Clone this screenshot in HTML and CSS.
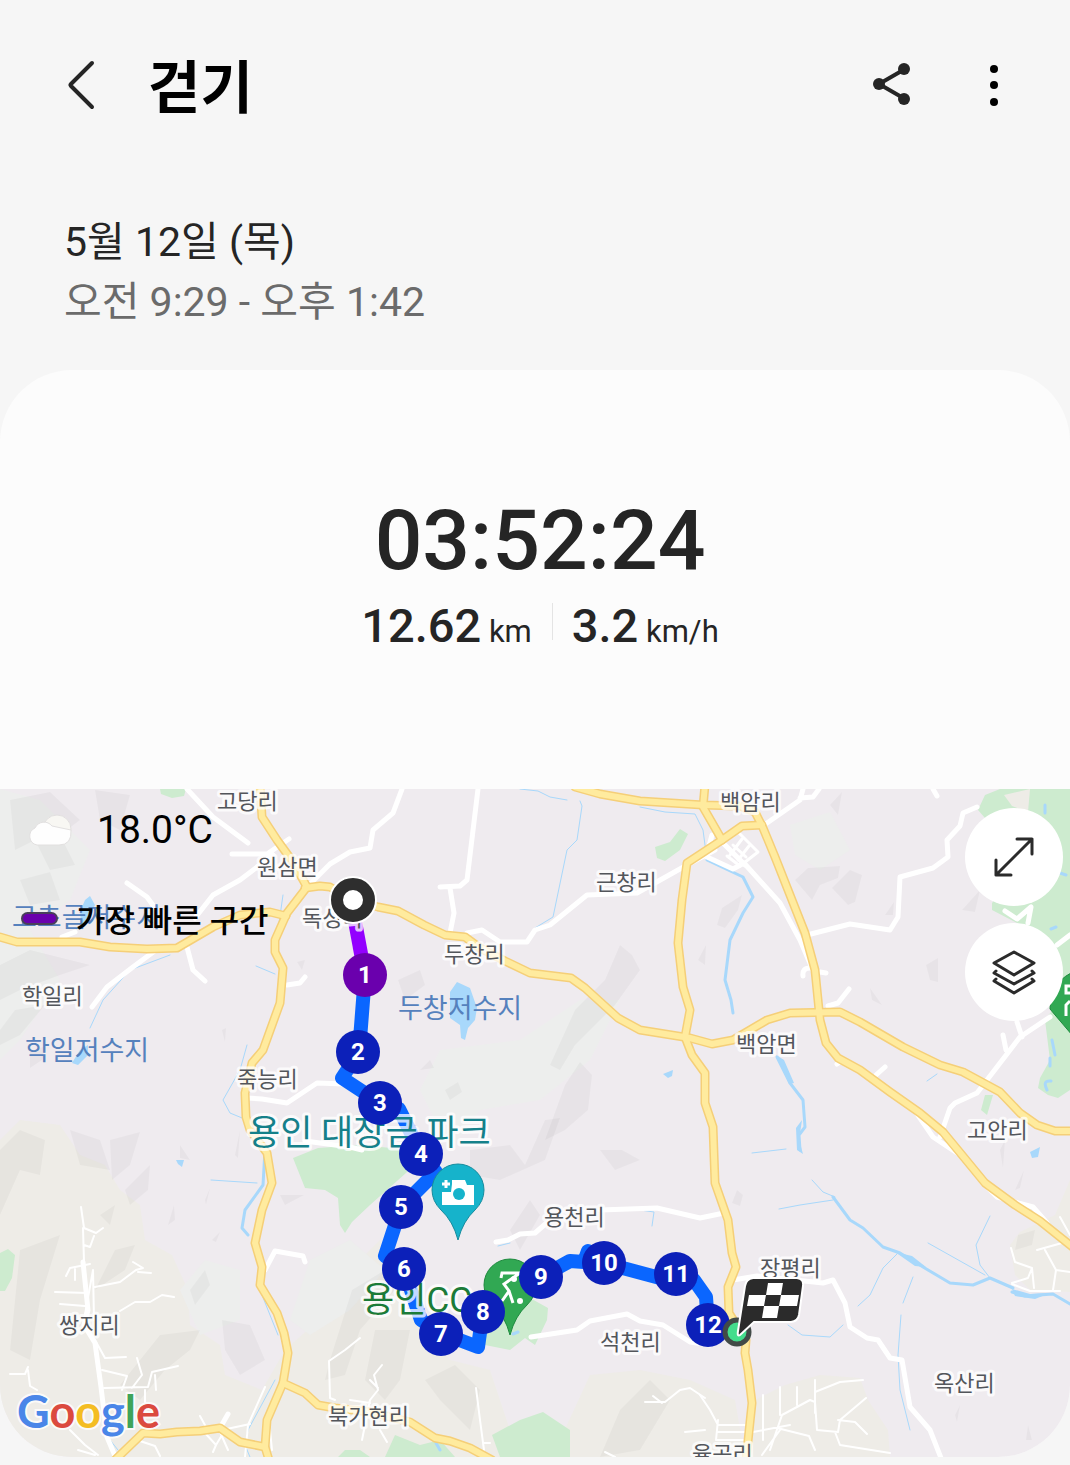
FILE: index.html
```html
<!DOCTYPE html>
<html lang="ko">
<head>
    <meta charset="UTF-8">
    <meta name="viewport" content="width=device-width, initial-scale=1.0">
    <title>걷기</title>
    <link rel="stylesheet" href="styles.css">
</head>
<body>
    <header class="app-bar">
        <button class="icon-button back" type="button" aria-label="뒤로">
            <svg width="36" height="60" viewBox="0 0 36 60"><path d="M28 7 L7 28 Q6 29 7 30 L28 51"/></svg>
        </button>
        <h1>걷기</h1>
        <button class="icon-button share" type="button" aria-label="공유">
            <svg width="60" height="60" viewBox="0 0 60 60">
                <path d="M47 13 L21 28 L47 43"/>
                <circle cx="21" cy="28" r="6"/><circle cx="46" cy="13" r="6"/><circle cx="46" cy="43" r="6"/>
            </svg>
        </button>
        <button class="icon-button more" type="button" aria-label="더보기">
            <svg width="24" height="60" viewBox="0 0 24 60">
                <circle cx="12" cy="13" r="4"/><circle cx="12" cy="29" r="4"/><circle cx="12" cy="46" r="4"/>
            </svg>
        </button>
    </header>

    <section class="period">
        <p class="date">5월 12일 (목)</p>
        <p class="hours">오전 9:29 - 오후 1:42</p>
    </section>

    <main class="card">
        <section class="summary">
            <p class="duration">03:52:24</p>
            <div class="stats">
                <p class="stat">12.62 <span>km</span></p>
                <p class="stat">3.2 <span>km/h</span></p>
            </div>
        </section>

        <section class="map">
            <svg class="map-canvas" viewBox="0 789 1070 668">
                <rect class="land" x="0" y="789" width="1070" height="668"/>

                <!-- hills -->
                <g class="sand">
                    <path d="M0 1140 L20 1120 L60 1125 L80 1155 L105 1165 L120 1190 L140 1205 L145 1240 L172 1255 L188 1290 L190 1325 L220 1345 L225 1375 L262 1390 L285 1350 L330 1310 L350 1270 L380 1240 L400 1300 L450 1360 L490 1370 L510 1430 L560 1440 L590 1375 L640 1370 L690 1380 L735 1400 L745 1457 L0 1457 Z"/>
                    <path d="M755 1400 L785 1385 L820 1375 L860 1378 L868 1400 L888 1430 L890 1457 L750 1457 Z"/>
                    <path d="M1070 1180 L1055 1215 L1020 1232 L1010 1245 L1015 1275 L1030 1290 L1070 1292 Z"/>
                </g>
                <g class="pale">
                    <path d="M0 789 L40 800 L90 850 L70 900 L30 930 L60 980 L20 1040 L0 1060 Z"/>
                    <path d="M420 1090 L440 1050 L520 1040 L580 1000 L620 1000 L590 1060 L540 1100 L480 1110 L450 1150 Z"/>
                    <path d="M310 1260 L350 1240 L385 1270 L350 1310 L310 1335 L290 1320 Z"/>
                    <path d="M790 825 L830 812 L850 850 L820 870 L795 855 Z"/>
                    <path d="M180 1290 L205 1260 L240 1270 L240 1320 L200 1335 Z"/>
                </g>
                <g class="shade">
                    <path d="M10 800 L50 792 L80 820 L60 835 L75 865 L50 870 L35 840 L15 850 Z"/>
                    <path d="M95 790 L130 795 L120 830 L100 820 Z"/>
                    <path d="M20 880 L50 872 L60 900 L30 905 Z"/>
                    <path d="M0 965 L30 950 L90 965 L60 975 L20 990 L0 1000 Z"/>
                    <path d="M15 1010 L45 1005 L20 1035 L0 1045 L0 1030 Z"/>
                    <path d="M30 1052 L45 1046 L42 1060 L30 1068 Z"/>
                    <path d="M0 1150 L20 1130 L45 1140 L40 1175 L20 1170 L0 1215 Z"/>
                    <path d="M70 1130 L100 1140 L110 1170 L80 1165 Z"/>
                    <path d="M110 1140 L140 1132 L130 1165 L112 1180 Z"/>
                    <path d="M125 1190 L150 1165 L148 1190 L130 1205 Z"/>
                    <path d="M20 1250 L60 1235 L40 1300 L30 1360 L10 1350 Z"/>
                    <path d="M95 1290 L115 1250 L135 1245 L125 1270 Z"/>
                    <path d="M100 1215 L115 1205 L110 1225 Z"/>
                    <path d="M190 1290 L205 1270 L210 1285 L195 1305 Z"/>
                    <path d="M160 1335 L200 1330 L190 1350 L165 1370 L140 1400 L120 1385 Z"/>
                    <path d="M222 1320 L250 1325 L265 1360 L240 1375 L225 1350 Z"/>
                    <path d="M180 1145 L190 1160 L180 1158 Z M205 1200 L210 1188 L206 1205 Z M235 1155 L240 1130 L238 1158 Z"/>
                    <path d="M280 1195 L304 1195 L285 1205 Z M212 1240 L220 1232 L216 1242 Z M174 1205 L175 1220 L168 1225 Z"/>
                    <path d="M330 1360 L352 1290 L385 1270 L395 1290 L360 1330 L345 1375 L325 1380 Z"/>
                    <path d="M375 1330 L410 1330 L400 1380 L385 1400 L365 1380 Z"/>
                    <path d="M425 1380 L455 1365 L480 1390 L470 1430 L440 1400 Z"/>
                    <path d="M470 1150 L510 1145 L525 1165 L545 1120 L560 1118 L545 1160 L500 1180 L470 1175 Z"/>
                    <path d="M550 1065 L575 1010 L605 980 L620 945 L632 955 L640 970 L615 1005 L600 1020 L575 1045 L560 1070 Z"/>
                    <path d="M565 1085 L580 1062 L592 1075 L588 1110 L565 1130 L545 1140 Z"/>
                    <path d="M398 980 L420 970 L425 985 L405 1000 Z M445 1090 L458 1082 L462 1092 L450 1100 Z M420 1070 L430 1060 L434 1068 Z"/>
                    <path d="M510 1230 L530 1200 L540 1215 L520 1250 Z M600 1150 L622 1150 L640 1160 L615 1170 Z"/>
                    <path d="M795 880 L808 868 L840 866 L838 878 L820 885 L812 900 Z"/>
                    <path d="M832 888 L850 870 L862 875 L855 902 L848 905 Z"/>
                    <path d="M830 805 L842 792 L838 815 Z M885 915 L894 902 L893 915 Z M962 910 L980 890 L975 912 Z"/>
                    <path d="M717 925 L722 908 L742 895 L738 910 L725 928 Z M926 965 L938 958 L938 982 L930 980 Z"/>
                    <path d="M870 988 L882 1005 L872 1000 Z M698 960 L706 945 L705 965 Z M732 1203 L737 1190 L743 1195 L740 1206 Z"/>
                    <path d="M620 1410 L650 1380 L670 1400 L640 1450 L600 1457 Z"/>
                    <path d="M1000 1150 L1005 1140 L1003 1168 Z M1015 1190 L1024 1170 L1020 1188 Z M955 1415 L960 1405 L957 1422 Z M1026 1440 L1028 1425 L1032 1440 Z"/>
                    <path d="M1018 1235 L1035 1230 L1032 1245 L1015 1250 Z M222 1030 L226 1028 L225 1042 Z M297 962 L305 960 L302 970 Z"/>
                </g>
                <g class="forest">
                    <path d="M160 789 L186 789 L184 796 L172 798 L161 794 Z"/>
                    <path d="M655 847 L670 842 L680 829 L688 834 L680 850 L665 861 L657 858 Z"/>
                    <path d="M293 1158 L318 1148 L360 1145 L412 1150 L415 1165 L370 1205 L352 1222 L345 1233 L340 1225 L338 1198 L325 1190 L305 1188 Z"/>
                    <path d="M0 1253 L8 1249 L15 1255 L12 1278 L5 1291 L0 1291 Z"/>
                    <path d="M480 1340 L500 1312 L530 1298 L548 1308 L547 1320 L535 1345 L525 1338 L510 1350 L485 1345 Z"/>
                    <path d="M492 1435 L520 1420 L543 1412 L570 1430 L570 1457 L500 1457 Z"/>
                    <path d="M395 1435 L420 1445 L440 1440 L455 1457 L385 1457 Z M338 1457 L345 1450 L360 1450 L370 1457 Z"/>
                    <path d="M978 810 L985 795 L1000 789 L1070 789 L1070 1090 L1058 1098 L1048 1095 L1038 1088 L1040 1078 L1050 1060 L1045 1020 L1060 1000 L1060 970 L1040 935 L992 910 L992 903 L1010 880 L1000 830 L985 818 Z"/>
                    <path d="M985 1095 L993 1095 L987 1115 L981 1110 Z"/>
                </g>
                <path class="sand" d="M1004 795 L1030 789 L1028 812 L1012 806 Z"/>

                <!-- water -->
                <g class="stream">
                    <path d="M520 789 L538 791 L550 797 L567 800 M580 801 L582 806 L577 840 L567 850 L553 917 L535 928"/>
                    <path d="M640 807 L665 812 L695 814 L703 830 L707 860"/>
                    <path class="wide" d="M707 860 L743 877 L753 897 L743 913 L730 940 L725 980 L731 1000 L733 1013"/>
                    <path class="wide" d="M777 1057 L790 1083 L803 1100 L805 1127 L799 1135 L800 1150"/>
                    <path class="wide" d="M833 1197 L850 1220 L863 1228 L883 1247 L900 1253 L923 1267 L950 1283 L973 1285 L990 1278 L1013 1288 M1012 1292 L1025 1296 L1053 1294 L1070 1304"/>
                    <path d="M812 1180 L823 1192 L835 1197 M779 1209 L800 1205 L833 1200 M897 1254 L883 1268 L870 1295 L858 1306 M990 1216 L976 1245 L980 1265 L990 1278 M928 1243 L985 1275 M913 1277 L903 1303"/>
                    <path d="M901 1315 L898 1355 L900 1390 L910 1430 M788 1325 L802 1335 L830 1337 L843 1325 M752 1153 L786 1149"/>
                    <path d="M170 955 L130 970 L103 1000 L90 1028 M256 966 L275 974 M283 895 L278 930"/>
                    <path d="M247 1045 L240 1070 L223 1100 L230 1113 L247 1120"/>
                    <path class="wide" d="M265 1150 L263 1185 L245 1210 L242 1228 L248 1235"/>
                    <path d="M211 1180 L257 1183 M260 1290 L278 1335 M275 1380 L248 1430 L245 1445 L250 1457 M110 1440 L118 1450 M498 1246 L510 1243 M640 1210 L654 1212 L652 1226 M927 1081 L937 1074"/>
                </g>
                <g class="lake">
                    <path d="M450 992 L457 982 L470 988 L477 1008 L475 1020 L468 1028 L465 1040 L461 1038 L460 1025 L450 1018 Z"/>
                    <path d="M80 912 L85 900 L90 896 L95 905 L90 915 L82 930 Z M72 1063 L80 1050 L88 1045 L88 1055 L78 1065 Z"/>
                    <path d="M176 1160 L184 1160 L182 1167 L178 1164 Z M663 1074 L673 1070 L672 1076 L668 1078 Z M1030 1152 L1040 1147 L1038 1157 L1032 1158 Z"/>
                    <path d="M776 1055 L784 1060 L794 1083 L789 1084 L783 1070 Z M895 1252 L912 1256 L926 1267 L915 1266 Z M796 1128 L802 1120 L799 1140 L803 1154 L797 1150 Z"/>
                    <path d="M1012 1289 L1030 1294 L1050 1293 L1035 1299 L1015 1296 Z"/>
                </g>
                <path class="stream wide" d="M1045 805 V813 M1060 873 L1066 875 M1051 929 L1056 927 M1052 1040 L1055 1055 M1050 1058 V1066 M1047 1090 Q1042 1080 1051 1081 M436 1443 L440 1450 M513 1334 L518 1332"/>

                <!-- minor roads -->
                <g class="lane">
                    <path d="M81 1207 L84 1228 L96 1233 L103 1228 M83 1228 L84 1262 M84 1245 L90 1247 L94 1236 M66 1276 L70 1268 L90 1264 M75 1269 V1280 M95 1287 L120 1282 L136 1270 L143 1268 L133 1262 M138 1272 L151 1273 M55 1292 L88 1293 M60 1304 L85 1306 M120 1311 L135 1302 L150 1302 L162 1295 L174 1297 M84 1320 L93 1270 L94 1320"/>
                    <path d="M10 1374 L25 1374 L28 1367 M28 1370 L30 1386 L37 1390 M95 1340 L105 1358 L126 1357 M102 1370 L127 1376 L122 1390 M104 1388 L148 1387 L152 1372 L178 1366 M137 1358 L142 1375 L132 1388 M155 1375 L156 1390 M145 1390 V1402 M70 1430 L85 1445 L98 1455 M78 1450 L95 1455 M137 1440 L155 1446 L160 1456"/>
                    <path d="M200 1416 L206 1427 L222 1430 L250 1424 M205 1433 L216 1445 L225 1430 M216 1445 L213 1452 M220 1432 L228 1450 M360 1338 L345 1350 L329 1361 L330 1398 L335 1400 M265 1387 L248 1425 L245 1457 M270 1430 L272 1450"/>
                    <path d="M382 1365 L374 1375 L378 1390 L370 1400 L362 1440 M370 1380 L378 1388 M380 1430 L387 1442 M350 1400 L370 1403 M476 1388 L480 1420 L484 1450 M484 1443 L490 1443 M645 1402 L665 1402 L680 1390 L690 1388 L705 1398 M653 1396 L662 1403 M605 1452 L615 1457 M685 1432 L705 1430"/>
                    <path d="M700 1395 L710 1410 L718 1425 L750 1425 M718 1432 L748 1432 M718 1420 L716 1440 L748 1440 M763 1395 V1440 M780 1387 V1415 M797 1387 V1405 M815 1380 V1413 M815 1392 L840 1382 L863 1380 M770 1450 L782 1415 L810 1400 L815 1402 L817 1430 L838 1432 L840 1420 L866 1398 M838 1420 L855 1422 L867 1434 M777 1428 L809 1436 L815 1450 M835 1432 L840 1445 L890 1453 M753 1432 L790 1425 M762 1455 L780 1430"/>
                    <path d="M1011 1248 L1015 1262 L1032 1268 L1028 1278 L1012 1283 M1032 1268 L1034 1288 M1045 1250 L1056 1270 L1070 1272 M1037 1250 L1062 1243 M1056 1270 L1053 1290 M1060 1217 L1070 1235 M1012 1284 L1030 1291 L1060 1291"/>
                </g>
                <path class="block" d="M727 840 L738 832 L758 852 L740 866 L727 856 M733 845 L746 857 M742 839 L730 855 M749 846 L738 860"/>
                <g class="street">
                    <path d="M402 789 L393 813 L373 830 L370 848 L350 852 L330 864 L310 884"/>
                    <path d="M478 789 L467 880 L460 886 L440 887 M450 888 L454 913 L450 933"/>
                    <path d="M467 933 L482 930 L500 942 L527 942 L535 930 L550 925 L587 895 L637 893 L687 865 L715 850"/>
                    <path d="M187 789 L213 817 L248 843 M232 854 L267 854 L289 839 M127 883 L147 897 L155 908 M195 918 L213 895 L240 880 L273 855"/>
                    <path d="M92 1007 L107 987 L133 967 L160 947 M187 947 L193 970 L205 981 M287 985 L300 983 L305 977 M247 1098 L262 1099 L287 1103 L317 1083 L345 1084 M62 937 L75 932"/>
                    <path d="M767 823 L800 800 L803 789 M800 798 L813 797 L819 789 M807 935 L850 924 L890 930 L898 917 L900 877 L933 868 L948 857 L947 840 L960 826 L963 813 L977 807 M933 789 L937 796"/>
                    <path d="M707 857 L733 869 L744 863 L780 903 L800 940 L815 975 M720 840 L745 865 M708 850 L712 835 M1005 911 L1017 919 L1031 907 L1028 923 M1057 945 L1070 935"/>
                    <path d="M820 972 L826 973 M803 976 Q802 968 810 968 M828 1006 L838 1003 L849 989 M837 1064 L843 1060 M876 1075 L885 1067 M1003 1035 L1006 1050 M1017 1022 L1022 1037"/>
                    <path d="M940 1137 L950 1108 L955 1103 L977 1093 L1020 1037 L1050 1017 M913 1108 L933 1137 L957 1153 M983 1183 L997 1197 L1033 1207 L1047 1223"/>
                    <path d="M733 1280 L757 1276 L823 1283 L833 1280 L845 1303 L850 1327 L867 1338 L878 1340 L890 1358 L902 1360 L910 1407 L930 1430 L941 1458"/>
                    <path d="M496 1242 L508 1240 L520 1234 L535 1233 L550 1220 M600 1210 L657 1208 L700 1218 L724 1213 M531 1337 L577 1330 L590 1321 L627 1314 L640 1321 L663 1325 L690 1342 L710 1345"/>
                    <path d="M265 1270 L275 1251 L303 1256 L305 1262 M83 1262 L88 1310 L84 1325 L95 1343 L101 1387 L107 1437 L115 1456 M220 1428 L228 1414"/>
                    <path d="M305 1141 L350 1147 L362 1150"/>
                </g>

                <!-- main roads, drawn twice for the casing -->
                <defs>
                    <g id="highways">
                        <path d="M0 937 L17 942 L80 942 L110 947 L147 949 L177 948 L213 927 L240 915 L270 912 L286 916"/>
                        <path d="M260 785 L262 817 L277 840 L293 862 L307 887 L287 913 L275 940 L275 952 L283 968 L280 1003 L263 1050 L252 1063 L245 1093 L246 1117 L250 1130 L267 1153 L272 1183 L262 1210 L255 1243 L262 1267 L260 1285 L277 1313 L284 1333 L288 1353 L283 1383 L267 1420 L265 1447 L269 1460"/>
                        <path d="M305 888 L320 886 L330 887 L352 900 L378 907 L398 911 L424 925 L445 935 L465 937 L480 948 L505 961 L530 973 L571 978 L585 988 L618 1018 L640 1030 L690 1038 L712 1044 L733 1040 L767 1020 L790 1013 L840 1012 L860 1022 L903 1047 L940 1065 L963 1072 L1000 1092 L1020 1113 L1037 1125 L1055 1131 L1075 1131"/>
                        <path d="M762 825 L742 826 L722 840 L687 863 L682 900 L678 943 L683 987 L690 1010 L685 1037 L692 1055 L705 1073 L705 1103 L713 1127 L715 1183 L728 1220 L732 1253 L736 1267 L728 1287 L729 1313 L746 1340 L745 1353 L748 1370 L752 1403 L746 1460"/>
                        <path d="M575 787 L600 794 L640 801 L703 805 L740 806 L755 812 L763 828 L775 857 L805 933 L815 970 L820 1020 L826 1043 L838 1058 L860 1070 L890 1092 L920 1113 L943 1132 L962 1155 L985 1183 L1015 1205 L1040 1221 L1075 1249"/>
                        <path d="M705 785 L703 807 L722 840"/>
                        <path d="M115 1460 L143 1433 L160 1434 L177 1432 L200 1431 L220 1428 L240 1442 L265 1447 M283 1383 L305 1393 L318 1405 L335 1408 L370 1412 L410 1422 L435 1438 L450 1441 L470 1448 L492 1460"/>
                    </g>
                </defs>
                <use class="road-edge" href="#highways"/>
                <use class="road" href="#highways"/>

                <!-- walked route -->
                <path class="route" d="M365 975 L359 1052 L342 1078 L380 1103 L399 1109 L421 1153 L436 1172 L401 1207 L385 1256 L404 1269 L421 1320 L441 1333 L478 1347 L483 1311 L541 1277 L570 1261 L584 1262 L588 1251 L604 1263 L660 1278 L676 1274 L694 1280 L706 1297 L708 1325"/>
                <path class="route fastest" d="M351 900 L365 975"/>

                <!-- place names -->
                <g class="place">
                    <text x="217" y="809">고당리</text>
                    <text x="257" y="875">원삼면</text>
                    <text x="302" y="926">독성리</text>
                    <text x="22" y="1004">학일리</text>
                    <text x="237" y="1087">죽능리</text>
                    <text x="596" y="890">근창리</text>
                    <text x="444" y="962">두창리</text>
                    <text x="720" y="810">백암리</text>
                    <text x="736" y="1052">백암면</text>
                    <text x="967" y="1138">고안리</text>
                    <text x="544" y="1225">용천리</text>
                    <text x="760" y="1276">장평리</text>
                    <text x="600" y="1350">석천리</text>
                    <text x="934" y="1391">옥산리</text>
                    <text x="59" y="1333">쌍지리</text>
                    <text x="328" y="1424">북가현리</text>
                    <text x="692" y="1462">율곡리</text>
                </g>
                <g class="place water">
                    <text x="12" y="927">고초골저수지</text>
                    <text x="398" y="1018">두창저수지</text>
                    <text x="25" y="1060">학일저수지</text>
                </g>
                <text class="place sight" x="248" y="1145">용인 대장금 파크</text>
                <text class="place golf" x="362" y="1312">용인CC</text>

                <!-- sight pins -->
                <path class="pin" d="M458 1240 Q453 1221 441 1210 Q432 1201 432 1190 A26 26 0 0 1 484 1190 Q484 1201 475 1210 Q463 1221 458 1240 Z"/>
                <path class="glyph" d="M452 1184 V1180 H465 L467 1185 H474 V1205 H442 V1192 H451 Z"/>
                <path class="glyph-line" d="M446 1180 V1188 M442 1184 H450"/>
                <circle class="pin-eye" cx="459" cy="1194" r="6"/>
                <path class="pin golf-pin" d="M510 1335 Q505 1316 493 1305 Q484 1296 484 1285 A26 26 0 0 1 536 1285 Q536 1296 527 1305 Q515 1316 510 1335 Z"/>
                <path class="glyph-line" d="M520 1273 H502 L501 1278 M520 1273 L504 1284 L509 1291 L502 1301 M509 1291 L513 1303"/>
                <circle class="glyph" cx="514" cy="1279" r="3"/><circle class="glyph" cx="520" cy="1301" r="3"/>
                <path class="pin golf-pin" d="M1050 1009 Q1050 980 1078 970 V1042 Z"/>
                <path class="glyph-line" d="M1070 986 H1066 V993 H1070 M1070 1001 L1066 1005 V1016"/>

                <!-- kilometre markers -->
                <g class="marker">
                    <circle class="fastest" cx="365" cy="975" r="22"/><text x="365" y="983">1</text>
                    <circle cx="358" cy="1052" r="22"/><text x="358" y="1060">2</text>
                    <circle cx="380" cy="1103" r="22"/><text x="380" y="1111">3</text>
                    <circle cx="421" cy="1154" r="22"/><text x="421" y="1162">4</text>
                    <circle cx="401" cy="1207" r="22"/><text x="401" y="1215">5</text>
                    <circle cx="404" cy="1269" r="22"/><text x="404" y="1277">6</text>
                    <circle cx="441" cy="1334" r="22"/><text x="441" y="1342">7</text>
                    <circle cx="483" cy="1312" r="22"/><text x="483" y="1320">8</text>
                    <circle cx="541" cy="1277" r="22"/><text x="541" y="1285">9</text>
                    <circle cx="604" cy="1263" r="22"/><text x="604" y="1271">10</text>
                    <circle cx="676" cy="1274" r="22"/><text x="676" y="1282">11</text>
                    <circle cx="708" cy="1325" r="22"/><text x="708" y="1333">12</text>
                </g>

                <circle class="start-halo" cx="353" cy="900" r="23"/>
                <circle class="start" cx="353" cy="900" r="16"/>
                <circle class="finish-dot" cx="737" cy="1332" r="12"/>
                <path class="flag" d="M753 1278 H797 Q804 1279 803 1286 L799 1315 Q798 1321 791 1322 H754 L740 1335 Q737 1337 738 1331 L745 1286 Q746 1279 753 1278 Z"/>
                <path class="checks" d="M768 1283 H783 L781 1295 H766 Z M749 1295 H766 L764 1306 H747 Z M781 1295 H799 L797 1306 H779 Z M764 1306 H779 L777 1318 H762 Z"/>

                <text class="google" x="17" y="1428"><tspan class="b">G</tspan><tspan class="r">o</tspan><tspan class="y">o</tspan><tspan class="b">g</tspan><tspan class="g">l</tspan><tspan class="r">e</tspan></text>
            </svg>

            <div class="map-info">
                <p class="weather">
                    <svg width="46" height="32" viewBox="0 0 46 32">
                        <circle cx="30" cy="15" r="14"/>
                        <path d="M10 31 A9 9 0 0 1 8 14 A10 10 0 0 1 25 12 L44 16 Q45 31 32 31 Z"/>
                    </svg>
                    18.0°C
                </p>
                <p class="legend"><span class="swatch"></span>가장 빠른 구간</p>
            </div>

            <div class="map-controls">
                <button type="button" aria-label="지도 확대">
                    <svg width="48" height="48" viewBox="0 0 48 48"><path d="M6 42 L42 6 M27 6 H42 V21 M6 27 V42 H21"/></svg>
                </button>
                <button type="button" aria-label="지도 유형">
                    <svg width="48" height="48" viewBox="0 0 48 48"><path d="M24 4 L44 15 L24 27 L4 15 Z M6 23 L4 25 L24 36 L44 25 L42 23 M6 31 L4 33 L24 45 L44 33 L42 31"/></svg>
                </button>
            </div>
        </section>
    </main>
</body>
</html>
```
FILE: styles.css
```css
body {
    margin: 0;
    background-color: #f6f6f6;
    color: #252525;
    font-family: Roboto, "Noto Sans CJK KR", sans-serif;
}
h1, p {
    margin: 0;
}
button {
    padding: 0;
    border: none;
    cursor: pointer;
}

/* Top bar */
.app-bar {
    display: flex;
    align-items: flex-start;
    height: 60px;
    padding: 56px 64px 96px;
}
.app-bar h1 {
    flex: 1;
    margin-left: 48px;
    color: #000;
    font-size: 57px;
    font-weight: 700;
    line-height: 66px;
}
.icon-button {
    height: 60px;
    background: none;
}
.icon-button svg, .map-controls svg {
    display: block;
    margin: auto;
}
.icon-button path {
    fill: none;
    stroke: #252525;
    stroke-width: 4;
    stroke-linecap: round;
}
.share circle {
    fill: #252525;
}
.more {
    margin-left: 64px;
}

.period {
    padding: 0 64px 38px;
    font-size: 41px;
    line-height: 60px;
}
.hours {
    color: #6b6b6b;
}

/* Workout card */
.card {
    margin-bottom: 8px;
    overflow: hidden;
    border-radius: 72px;
    background-color: #fcfcfc;
}
.summary {
    padding: 123px 0 129px 10px;
    text-align: center;
}
.duration {
    font-size: 84px;
    font-weight: 500;
    line-height: 96px;
}
.stats {
    display: flex;
    justify-content: center;
    align-items: center;
    margin-top: 9px;
}
.stat {
    padding: 0 20px;
    font-size: 47px;
    font-weight: 500;
    line-height: 56px;
}
.stat span {
    margin-left: -4px;
    font-size: 31px;
    font-weight: 400;
}
.stat + .stat {
    background: linear-gradient(#e4e4e4, #e4e4e4) left 5px / 1px 37px no-repeat;
}

/* Map */
.map {
    position: relative;
}
.map-canvas {
    display: block;
    width: 100%;
    height: auto;
}
.land { fill: #efebef; }
.sand { fill: #eeece7; }
.pale { fill: #edeeed; }
.shade { fill: #000; fill-opacity: 0.03; }
.forest { fill: #cdebcf; }
.lake { fill: #a8d8fb; }
.stream, .lane, .block, .street, .road, .road-edge, .route {
    fill: none;
    stroke-linecap: round;
    stroke-linejoin: round;
}
.stream { stroke: #a8d8fb; stroke-width: 1; }
.wide { stroke-width: 3; }
.lane { stroke: #fff; stroke-width: 2; }
.block { stroke: #fff; stroke-width: 3; }
.street { stroke: #fff; stroke-width: 5; }
.road-edge { stroke: #f5cf78; stroke-width: 9; }
.road { stroke: #ffeb9e; stroke-width: 6; }
.route { stroke: #0a66ff; stroke-width: 14; }
.route.fastest { stroke: #9300ff; stroke-linecap: butt; }

.place {
    fill: #53565b;
    stroke: rgba(255, 255, 255, 0.75);
    stroke-width: 6;
    stroke-linejoin: round;
    paint-order: stroke;
    font-size: 22px;
}
.place.water {
    fill: #5581bd;
    stroke: none;
    font-size: 27px;
}
.place.sight {
    fill: #15808a;
    font-size: 35px;
}
.place.golf {
    fill: #1b7b38;
    font-size: 35px;
}
.pin { fill: #16b3cb; stroke: #168c9e; stroke-width: 1; }
.pin-eye { fill: #16b3cb; }
.pin.golf-pin { fill: #31a853; stroke: #1e8a3e; }
.glyph { fill: #fff; }
.glyph-line { fill: none; stroke: #fff; stroke-width: 3; }

.marker { fill: #0c20b9; }
.marker .fastest { fill: #6a00ad; }
.marker text {
    fill: #fff;
    font-size: 24px;
    font-weight: 700;
    text-anchor: middle;
}
.start-halo { fill: #fff; stroke: #fff; stroke-width: 2; }
.start { fill: #fff; stroke: #2e2e2e; stroke-width: 12; }
.finish-dot { fill: #43dd8c; stroke: #424a47; stroke-width: 5; }
.flag { fill: #2b2b2b; stroke: #fff; stroke-width: 2; }
.checks { fill: #fff; }

.google {
    stroke: rgba(255, 255, 255, 0.8);
    stroke-width: 4;
    paint-order: stroke;
    font-family: Lato, sans-serif;
    font-size: 45px;
    font-weight: 700;
}
.google .b { fill: #4a86e8; }
.google .r { fill: #db4a3f; }
.google .y { fill: #f4bd22; }
.google .g { fill: #3fa45a; }

.map-info {
    position: absolute;
    top: 17px;
    left: 21px;
    color: #000;
}
.weather, .legend {
    display: flex;
    align-items: center;
    height: 48px;
}
.weather {
    gap: 24px;
    padding-left: 6px;
    font-size: 39px;
}
.weather svg {
    fill: #fefefe;
    stroke: #e2e0e0;
}
.weather circle {
    fill: #f8f7f3;
}
.legend {
    gap: 18px;
    margin-top: 40px;
    font-size: 32px;
    font-weight: 500;
}
.swatch {
    box-sizing: border-box;
    width: 37px;
    height: 13px;
    border: 2px solid #49405a;
    border-radius: 7px;
    background-color: #6a00ad;
}

.map-controls {
    position: absolute;
    top: 19px;
    right: 7px;
    display: grid;
    gap: 17px;
}
.map-controls button {
    width: 98px;
    height: 98px;
    border-radius: 50%;
    background-color: #fff;
}
.map-controls path {
    fill: none;
    stroke: #2b2b2b;
    stroke-width: 3;
    stroke-linecap: round;
    stroke-linejoin: round;
}
```
